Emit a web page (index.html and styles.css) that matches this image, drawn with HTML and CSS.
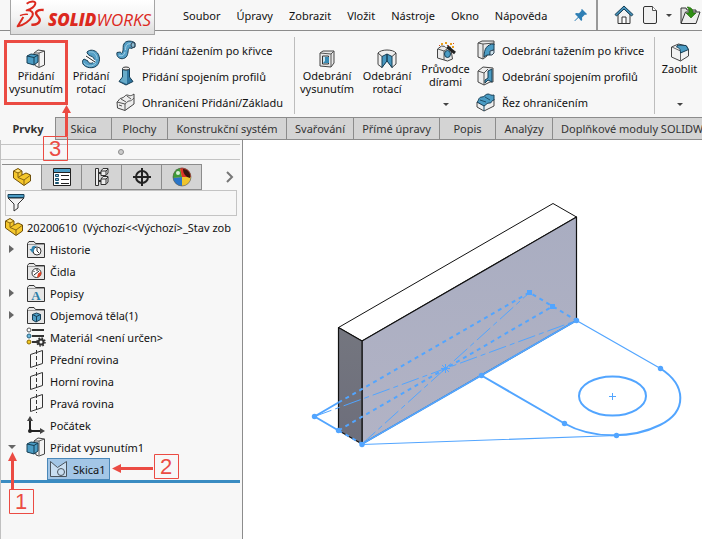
FILE: index.html
```
<!DOCTYPE html>
<html lang="cs">
<head>
  <meta charset="UTF-8" />
  <meta name="viewport" content="width=device-width, initial-scale=1.0"/>
  <title>SOLIDWORKS</title>
  <link rel="stylesheet" href="styles.css">
</head>
<body>
  <!-- Title bar -->
  <header class="topbar">
    <div class="logo">
      <svg class="logo-mark" width="28" height="28" viewBox="0 0 84 84" fill="none" stroke="#dc291e" stroke-linejoin="round">
        <path d="M32 11C42 3 60 2 58 11C56 20 44 27 32 31C46 30 54 37 49 48C42 62 24 76 5 79L22 51" stroke-width="6"/>
        <path d="M12 47C20 43 28 42 36 43" stroke-width="4"/>
        <path d="M83 30C66 28 57 35 61 43C65 51 74 55 71 63C68 71 58 75 46 74" stroke-width="7"/>
      </svg>
      <span class="logo-text"><b>SOLID</b>WORKS</span>
    </div>
    <nav class="menu">
      <a href="#">Soubor</a>
      <a href="#">Úpravy</a>
      <a href="#">Zobrazit</a>
      <a href="#">Vložit</a>
      <a href="#">Nástroje</a>
      <a href="#">Okno</a>
      <a href="#">Nápověda</a>
    </nav>
    <button class="icon-btn pin" aria-label="Připnout">
      <svg width="14" height="14" viewBox="0 0 14 14" fill="#2f7fb5">
        <path d="M8 1l5 5-1 1-1-.5-3 3 .2 2.500-1 1L4.500 9.800 1 13H.500v-.5L4 9 1 6l1-1 3 .2 2.600-2.700L7 2z"/>
      </svg>
    </button>
    <div class="quick">
      <button class="icon-btn" aria-label="Domů">
        <svg width="20" height="20" viewBox="0 0 20 20">
          <path d="M4 9.500v9h12v-9L10 4z" fill="#f2f2f2" stroke="#333"/>
          <path d="M8 18v-6h4v6" fill="#fff" stroke="#333"/>
          <path d="M10 1L1 9.500l1.500 1.500L10 4l7.500 7 1.500-1.500z" fill="#4794bd" stroke="#143d54"/>
        </svg>
      </button>
      <button class="icon-btn" aria-label="Nový">
        <svg width="16" height="20" viewBox="0 0 16 20">
          <path d="M3 1.500h7.500l4 4V17q0 1.500-1.500 1.500H3Q1.500 18.500 1.500 17V3Q1.500 1.500 3 1.500z" fill="#f1f1f1" stroke="#333"/>
          <path d="M10.500 1.500v4h4" fill="#fff" stroke="#555"/>
        </svg>
      </button>
      <span class="caret"></span>
      <button class="icon-btn" aria-label="Otevřít">
        <svg width="22" height="20" viewBox="0 0 22 20">
          <path d="M1 18V3h5l1 2h9v5" fill="#ddd" stroke="#333"/>
          <path d="M1 18.500L5.500 7H20l-4 11.500z" fill="#eee" stroke="#333"/>
          <path d="M7 2c4 0 6 2 6 6h3l-5 5-5-5h3c0-3 0-4-2-6z" fill="#2f8f14" stroke="#1c6208" stroke-width=".6"/>
        </svg>
      </button>
    </div>
  </header>

  <!-- Ribbon -->
  <section class="ribbon">
    <button class="tool tool-main">
      <svg width="20" height="20" viewBox="0 0 20 20">
        <path d="M8 4l4-3 6.500 1v14L13 18.500l-4-2z" fill="#f4f4f4" stroke="#444"/>
        <path d="M13 4l5.500-2M13 4v14M9 4l4 0" fill="none" stroke="#555"/>
        <path d="M1 7l4-2 7 1v7l-4 3-7-2z" fill="#4b9cc4" stroke="#163d52"/>
        <path d="M1 7l7 1.500 4-2.500M8 8.500V16" fill="none" stroke="#163d52"/>
      </svg>
      <span>Přidání<br>vysunutím</span>
    </button>
    <button class="tool">
      <svg width="20" height="20" viewBox="0 0 20 20">
        <path d="M6 3C9 0 14 1 16.500 4c3 4 2.500 10-1 13-4 3-11 2-13.500-2-1-2-.5-4 1-5l4 2c0 2 3 3 5 1.500 2-2 1-5-1-6-2-.8-4-1-5-4z" fill="#559fc6" stroke="#173e55"/>
        <path d="M8 3c5-1 8 3 8 7M3 14c3 4 9 4 12 0" fill="none" stroke="#9acbe0"/>
        <path d="M5 7l9 6" stroke="#fff" stroke-width="3"/><path d="M5 7l9 6" stroke="#222"/>
      </svg>
      <span>Přidání<br>rotací</span>
    </button>
    <div class="tool-list">
      <button class="row-tool">
        <svg width="20" height="20" viewBox="0 0 20 20">
          <path d="M1 12.500C0 17 4 19.500 7.500 18.500c5-1.500 4-6 5-9 .5-1.500 1.500-2 2.500-1l4-1.500V3c-2-2-8-3-10.500 0C6 6 8 9 6.500 12.500 5.500 14 4.500 13 4.500 12z" fill="#559fc6" stroke="#173e55"/>
          <path d="M9.500 10c0-5 2-7 6-6M3 15c3 2 5 0 6-3" fill="none" stroke="#a9d2e5"/>
          <ellipse cx="17" cy="5" rx="2" ry="2.500" fill="#8dbdd3" stroke="#345"/>
        </svg>
        <span>Přidání tažením po křivce</span>
      </button>
      <button class="row-tool">
        <svg width="20" height="20" viewBox="0 0 20 20">
          <path d="M6.500 3v8L3 15.500 10 19l7-3.500-3.500-4.500V3z" fill="#2f76a0" stroke="#173e55"/>
          <path d="M7 4.500h4V18l-7-3 3-4z" fill="#68abc9"/>
          <ellipse cx="10" cy="2.500" rx="3.500" ry="1.500" fill="#eee" stroke="#333"/>
        </svg>
        <span>Přidání spojením profilů</span>
      </button>
      <button class="row-tool">
        <svg width="20" height="20" viewBox="0 0 20 20">
          <path d="M1 10c2-1 2-4 5-4 3-1 3-3 5-3s3 2 7-1v10L9 18.500l-7.500-2.500z" fill="#ededed" stroke="#444"/>
          <path d="M1 10l8 2c2-1 2-3 4-3s3-1 5-3M9 12v6M5 7l5 3M11 4l4 3M3 13l3 1" fill="none" stroke="#555"/>
        </svg>
        <span>Ohraničení Přidání/Základu</span>
      </button>
    </div>
    <div class="divider"></div>
    <button class="tool wide">
      <svg width="20" height="20" viewBox="0 0 20 20">
        <path d="M3 4l3-2 11 0v12l-3 4-11-1z" fill="#e8e8e8" stroke="#444"/>
        <path d="M3 4l11 1 3-3M14 5v13" fill="none" stroke="#555"/>
        <path d="M5.500 7h6v8h-6z" fill="#c9e4f0" stroke="#333"/>
        <path d="M8 8h4v6H6l2-2z" fill="#388bb4"/>
      </svg>
      <span>Odebrání<br>vysunutím</span>
    </button>
    <button class="tool wide">
      <svg width="20" height="20" viewBox="0 0 20 20">
        <path d="M1 4c3-4 15-4 18 0v11l-4 3.500-4-6-2 0-4 6-4-3z" fill="#eee" stroke="#444"/>
        <path d="M5 7.500l5-2.500v7l-5 6.500zM15 7.500l-5-2.500v7l5 6.500z" fill="#4797c0" stroke="#173e55"/>
        <path d="M1 4l4 3.500M19 4l-4 3.500" stroke="#444"/>
      </svg>
      <span>Odebrání<br>rotací</span>
    </button>
    <button class="tool tool-drop">
      <svg width="20" height="20" viewBox="0 0 20 20">
        <path d="M1.500 7l4-3 9 1 2 12-5 2-10-3z" fill="#e9e9e9" stroke="#444"/>
        <path d="M2 7l6 2 6-4M8 9v9" fill="none" stroke="#555"/>
        <ellipse cx="11.500" cy="12" rx="3" ry="3.500" fill="#4b9cc4" stroke="#173e55"/>
        <path d="M10 4l9 7" stroke="#222" stroke-width="3"/>
        <path d="M9 3l2 2" stroke="#fff" stroke-width="2"/>
        <path d="M5 1h2v2H5zM9 0h2v2H9zM14 1h2v2h-2zM16 4h2v2h-2z" fill="#eaa01f"/>
        <path d="M3 3h1v1H3zM12 3h1v1h-1zM17 1h1v1h-1z" fill="#d04b20"/>
      </svg>
      <span>Průvodce<br>dírami</span>
      <i class="caret"></i>
    </button>
    <div class="tool-list">
      <button class="row-tool">
        <svg width="20" height="20" viewBox="0 0 20 20">
          <path d="M2 3l4-2 12 0v4c-5 0-7 5-7 11l-4 3-5-2z" fill="#e9e9e9" stroke="#444"/>
          <path d="M2 3l5 1 11-1M7 4v15" fill="none" stroke="#555"/>
          <path d="M8 17C8 9 11 4 18 4v6c-3 0-4 2-4 5l-3 0z" fill="#4b9cc4" stroke="#173e55"/>
          <path d="M14 11l4-1v3l-2 2h-2z" fill="#cfe4ee" stroke="#345"/>
        </svg>
        <span>Odebrání tažením po křivce</span>
      </button>
      <button class="row-tool">
        <svg width="20" height="20" viewBox="0 0 20 20">
          <path d="M2 5l5-4 10 1v14l-3 0-6 3-6-3z" fill="#eee" stroke="#444"/>
          <path d="M2 5l6 2 4-4M8 7v12" fill="none" stroke="#555"/>
          <path d="M12 5l4-2v13l-4-2-3 3V14l3-2z" fill="#4b9cc4" stroke="#173e55"/>
        </svg>
        <span>Odebrání spojením profilů</span>
      </button>
      <button class="row-tool">
        <svg width="20" height="20" viewBox="0 0 20 20">
          <path d="M1 10l7 3 10-6v7L8 19l-7-4z" fill="#eee" stroke="#444"/>
          <path d="M1 10C3 9 2 5 6 5c3 0 3-3 6-3 2 0 3 2 6 1v5c-3 0-2 4-5 3-2 0-3 2-5 3z" fill="#4b9cc4" stroke="#173e55"/>
          <path d="M4 8l6 2M9 5l5 3M8 13v6" fill="none" stroke="#1d516c"/>
        </svg>
        <span>Řez ohraničením</span>
      </button>
    </div>
    <div class="divider"></div>
    <button class="tool tool-drop tool-last">
      <svg width="20" height="20" viewBox="0 0 20 20">
        <path d="M1.500 5l7-3 8 2 2 4v6l-8 5-9-4z" fill="#f2f2f2" stroke="#444"/>
        <path d="M2 5l8.500 4v10" fill="none" stroke="#666"/>
        <path d="M8 3l8 .5 2.500 4-8 3.500c0-4-1-5-4-6z" fill="#4b9cc4" stroke="#173e55"/>
      </svg>
      <span>Zaoblit</span>
      <i class="caret"></i>
    </button>
  </section>

  <nav class="tabs">
    <button class="tab active">Prvky</button>
    <button class="tab">Skica</button>
    <button class="tab">Plochy</button>
    <button class="tab">Konstrukční systém</button>
    <button class="tab">Svařování</button>
    <button class="tab">Přímé úpravy</button>
    <button class="tab">Popis</button>
    <button class="tab">Analýzy</button>
    <button class="tab tab-last">Doplňkové moduly SOLIDWORKS</button>
  </nav>

  <main class="workspace">
    <!-- Feature manager -->
    <aside class="panel">
      <div class="splitter"><span class="dot"></span></div>
      <div class="panel-tabs">
        <button class="panel-tab active" aria-label="Strom">
          <svg width="20" height="20" viewBox="0 0 20 20"><use href="#part"/></svg>
        </button>
        <button class="panel-tab" aria-label="Vlastnosti">
          <svg width="20" height="20" viewBox="0 0 20 20">
            <path d="M1.500 1.500h17v17h-17z" fill="#fff" stroke="#222"/>
            <path d="M2 2h16v3H2z" fill="#4b9cc4"/>
            <path d="M1 5.500h18" stroke="#222"/>
            <path d="M3.500 7.500h3v2h-3zM3.500 11.500h3v2h-3zM3.500 15.500h3v1h-3z" fill="#8cc3dd" stroke="#17506d"/>
            <path d="M9 8.500h8M9 12.500h8M9 16.500h8" stroke="#222"/>
          </svg>
        </button>
        <button class="panel-tab" aria-label="Konfigurace">
          <svg width="20" height="20" viewBox="0 0 20 20" fill="#eee" stroke="#333">
            <path d="M3.500 1.500h3v17h-3z"/>
            <path d="M6.500 6h3M6.500 14h3" stroke-width="2"/>
            <path d="M9 4l2-2.500h5V6l-2 2.500H9zM9 12l2-2.500h5V15l-2 2.500H9z"/>
            <path d="M9 4h5v4M14 4l2-2M9 12h5v5M14 12l2-2" fill="none"/>
          </svg>
        </button>
        <button class="panel-tab" aria-label="Kóty">
          <svg width="20" height="20" viewBox="0 0 20 20" fill="none" stroke="#222" stroke-width="2">
            <circle cx="10" cy="10" r="6"/><path d="M10 1v18M1 10h18"/>
          </svg>
        </button>
        <button class="panel-tab" aria-label="Vzhled">
          <svg width="20" height="20" viewBox="0 0 20 20">
            <circle cx="10" cy="10" r="9" fill="#efc52c"/>
            <path d="M10 10L1 11A9 9 0 0 1 8 1z" fill="#3f9b38"/>
            <path d="M10 10L8 1a9 9 0 0 1 11 9z" fill="#dc3428"/>
            <path d="M10 10L1 11a9 9 0 0 0 9 8z" fill="#2a75c8"/>
            <path d="M11 2c5 0 8 4 7 9-4-1-7-4-7-9z" fill="#3a1710"/>
            <circle cx="6" cy="6" r="2" fill="#d8efd5"/>
            <circle cx="10" cy="10" r="9" fill="none" stroke="#555" stroke-width=".6"/>
          </svg>
        </button>
        <button class="more" aria-label="Další">
          <svg width="8" height="12" viewBox="0 0 8 12" fill="none" stroke="#777" stroke-width="2"><path d="M1 1l5 5-5 5"/></svg>
        </button>
      </div>
      <label class="filter">
        <svg width="20" height="20" viewBox="0 0 20 20">
          <path d="M2 5l6 6v7l4-3v-4l6-6z" fill="#f2f2f2" stroke="#333"/>
          <path d="M2 1.500h16v3H2z" fill="#4b9cc4" stroke="#173e55"/>
        </svg>
        <input type="text" aria-label="Filtr">
      </label>

      <ul class="tree">
        <li class="node root">
          <svg width="20" height="20" viewBox="0 0 20 20"><use href="#part"/></svg>
          <span>20200610&nbsp; (Výchozí&lt;&lt;Výchozí&gt;_Stav zob</span>
        </li>
        <li class="node">
          <i class="arrow"></i>
          <svg width="20" height="20" viewBox="0 0 20 20"><use href="#folder"/>
            <circle cx="11" cy="12" r="4" fill="#fff" stroke="#333"/><path d="M11 9v3l2 2" fill="none" stroke="#333"/>
            <path d="M3.500 10l3 4 2-4c0-2 1-3 3-3-4-1-6 0-6 3z" fill="#2f83af"/>
          </svg>
          <span>Historie</span>
        </li>
        <li class="node">
          <i class="arrow none"></i>
          <svg width="20" height="20" viewBox="0 0 20 20"><use href="#folder"/>
            <circle cx="10.500" cy="12" r="4.500" fill="#fff" stroke="#333"/>
            <path d="M11 16.500a4.500 4.500 0 0 0 4-6l-3 2z" fill="#e54224"/>
            <path d="M8 14l5-4M8 10v1M11 8v2" stroke="#222"/>
          </svg>
          <span>Čidla</span>
        </li>
        <li class="node">
          <i class="arrow"></i>
          <svg width="20" height="20" viewBox="0 0 20 20"><use href="#folder"/>
            <text x="10" y="17" class="folder-a">A</text>
          </svg>
          <span>Popisy</span>
        </li>
        <li class="node">
          <i class="arrow"></i>
          <svg width="20" height="20" viewBox="0 0 20 20"><use href="#folder"/>
            <path d="M6.500 9.500l4-1.500 4 1.500v5L10 17l-3.500-2z" fill="#4b9cc4" stroke="#173e55"/>
            <path d="M6.500 9.500l4 2 4-2M10.500 11v6" fill="none" stroke="#173e55"/>
          </svg>
          <span>Objemová těla(1)</span>
        </li>
        <li class="node">
          <i class="arrow none"></i>
          <svg width="20" height="20" viewBox="0 0 20 20">
            <path d="M6 3h12M6 9h12M6 15h6" stroke="#333" stroke-width="2"/>
            <circle cx="3" cy="3" r="2" fill="#fff" stroke="#555"/>
            <circle cx="3" cy="9" r="2" fill="#6dbbe0" stroke="#28627f"/>
            <circle cx="3" cy="15" r="2" fill="#f4c91e" stroke="#8b6a05"/>
            <circle cx="15" cy="15" r="2.500" fill="none" stroke="#333" stroke-width="2"/>
            <circle cx="15" cy="15" r="4" fill="none" stroke="#333" stroke-width="1.500" stroke-dasharray="1.600 1.540"/>
          </svg>
          <span>Materiál &lt;není určen&gt;</span>
        </li>
        <li class="node">
          <i class="arrow none"></i>
          <svg width="20" height="20" viewBox="0 0 20 20"><use href="#plane"/></svg>
          <span>Přední rovina</span>
        </li>
        <li class="node">
          <i class="arrow none"></i>
          <svg width="20" height="20" viewBox="0 0 20 20"><use href="#plane"/></svg>
          <span>Horní rovina</span>
        </li>
        <li class="node">
          <i class="arrow none"></i>
          <svg width="20" height="20" viewBox="0 0 20 20"><use href="#plane"/></svg>
          <span>Pravá rovina</span>
        </li>
        <li class="node">
          <i class="arrow none"></i>
          <svg width="20" height="20" viewBox="0 0 20 20">
            <path d="M4 4v12h12" fill="none" stroke="#222" stroke-width="2"/>
            <path d="M4 1l3 5H1zM19 16l-5 3v-6z" fill="#444"/>
            <circle cx="4" cy="16" r="2" fill="#222"/>
          </svg>
          <span>Počátek</span>
        </li>
        <li class="node">
          <i class="arrow open"></i>
          <svg width="20" height="20" viewBox="0 0 20 20">
            <path d="M8 4l4-3 6.500 1v15L13 19l-3-1z" fill="#f4f4f4" stroke="#444"/>
            <path d="M13 4l5.500-2M8 4l5 0v14" fill="none" stroke="#555"/>
            <path d="M1 7l4-2 7 1v8l-4 3-7-2z" fill="#4b9cc4" stroke="#163d52"/>
            <path d="M1 7l7 1.500 4-2.500M8 8.500V17" fill="none" stroke="#163d52"/>
          </svg>
          <span>Přidat vysunutím1</span>
        </li>
        <li class="node child">
          <button class="selected">
            <svg width="20" height="18" viewBox="0 0 20 18">
              <path d="M1.500 1.500l7 6 9-6v15h-16z" fill="#c9def1" stroke="#4b555e"/>
              <circle cx="12" cy="12" r="3.500" fill="#c9def1" stroke="#4b555e"/>
            </svg>
            <span>Skica1</span>
          </button>
        </li>
      </ul>
      <div class="rollback"></div>
    </aside>

    <!-- Model view -->
    <svg class="viewport" viewBox="243 140 459 399" preserveAspectRatio="xMinYMin meet">
      <defs>
        <linearGradient id="face" x1="0" y1="0" x2="0" y2="1">
          <stop offset="0" stop-color="#a9adc1"/><stop offset="1" stop-color="#b2b3c5"/>
        </linearGradient>
        <linearGradient id="side" x1="0" y1="0" x2="0" y2="1">
          <stop offset="0" stop-color="#74767f"/><stop offset="1" stop-color="#6d6e7b"/>
        </linearGradient>
      </defs>
      <g stroke="#111" stroke-linejoin="round">
        <path d="M338.500 327.500L553 203.500 576.500 217 362 341z" fill="#fff"/>
        <path d="M362 341L576.500 217V320.500L362 444z" fill="url(#face)" stroke-width="1.200"/>
        <path d="M338.500 327.500L362 341V444L338.500 430.500z" fill="url(#side)" stroke-width="1.200"/>
      </g>
      <g fill="none" stroke="#52a5ff" stroke-width="2">
        <path d="M362 444L576.500 320.500M314.500 416.500L338.500 430.500M314.500 416.500L338.500 402.500M481.500 375.500L564.500 423.500"/>
        <path d="M338.500 402.500L529.500 292.500 576.500 320.500M338.500 430.500L552.500 306.500M338.500 430.500L362 444" stroke-dasharray="4 4"/>
        <path d="M314.500 416.500L576.500 320.500M362 444L529.500 292.500" stroke-width="1" stroke-dasharray="18 4 5 4"/>
        <path d="M576.500 320.500L660.500 368.500M362 444.500L616.500 435.500" stroke-width="1.200"/>
        <path d="M660.500 368.500C686 385 688 411 660 425C632 439 592 439 564.500 423.500"/>
        <ellipse cx="612.500" cy="396" rx="33.500" ry="19.500"/>
        <path d="M609 396.500h7M612.500 393v7M441 368.500h9M445.500 364v9M442 365l7 7M449 365l-7 7" stroke-width="1"/>
      </g>
      <g fill="#52a5ff">
        <circle cx="314.500" cy="416.500" r="2.700"/><circle cx="338.500" cy="430.500" r="2.700"/>
        <circle cx="362" cy="444.500" r="2.700"/><circle cx="481.500" cy="375.500" r="2.700"/>
        <circle cx="576.500" cy="320.500" r="2.700"/><circle cx="660.500" cy="368.500" r="2.700"/>
        <circle cx="564.500" cy="423.500" r="2.700"/><circle cx="616.500" cy="435.500" r="2.700"/>
        <path d="M527 290h5v5h-5zM550 304h5v5h-5z"/>
      </g>
    </svg>
  </main>

  <!-- Step callouts laid over the window -->
  <svg class="callouts" width="200" height="539" viewBox="0 0 200 539">
    <g fill="none" stroke="#eb4b43">
      <path d="M66.500 136V112M12.500 489v-30M153 468.500h-33" stroke-width="3"/>
      <path d="M43.500 136.500h24v24h-24zM9.500 489.500h24v24h-24zM154.500 454.500h24v24h-24z"/>
    </g>
    <path d="M66.500 105l4.500 8h-9zM12.500 452l4.500 9H8zM112 468.500l9-4.500v9z" fill="#eb4b43"/>
    <g class="callout-text">
      <text x="55" y="156">3</text>
      <text x="21" y="509">1</text>
      <text x="166" y="474">2</text>
    </g>
  </svg>

  <!-- Shared icons -->
  <svg class="sprite" width="0" height="0">
    <symbol id="part" viewBox="0 0 20 20">
      <path d="M1.500 4L6 1.500 10 4v4l4-2 4.500 2v6L12 18.500 1.500 11z" fill="#f5c72c" stroke="#6f500b"/>
      <path d="M1.500 4L6 6l4-2M6 6v4.500L12 13l6-4.500M12 13v5M6 10.500L10 8" fill="none" stroke="#8a6713"/>
      <path d="M3 4l3-1.500L8.500 4 6 5z" fill="#ffe58a"/>
    </symbol>
    <symbol id="folder" viewBox="0 0 20 20">
      <path d="M1.500 18.500V4.500L3 2.500h5l1.500 2h9v14z" fill="#e6e6e6" stroke="#333"/>
      <path d="M2 5.500h16" stroke="#999"/>
    </symbol>
    <symbol id="plane" viewBox="0 0 20 20">
      <path d="M4.500 5.500l12-4v13l-12 4z" fill="none" stroke="#333"/>
      <path d="M10.500 1v19" fill="none" stroke="#333" stroke-dasharray="4 2"/>
    </symbol>
  </svg>
</body>
</html>
```

FILE: styles.css
```
* {
  margin: 0;
  padding: 0;
  box-sizing: border-box;
}

body {
  height: 100vh;
  display: flex;
  flex-direction: column;
  position: relative;
  overflow: hidden;
  background: #fff;
  color: #111;
  font-family: 'Noto Sans', 'Open Sans', sans-serif;
  font-size: 11px;
}

button {
  border: none;
  background: transparent;
  color: inherit;
  font: inherit;
  cursor: pointer;
}

svg {
  display: block;
  flex-shrink: 0;
}

.sprite {
  position: absolute;
}

.caret {
  width: 0;
  height: 0;
  border-left: 3px solid transparent;
  border-right: 3px solid transparent;
  border-top: 3px solid #444;
}

/* Title bar */
.topbar {
  display: flex;
  align-items: center;
  flex-shrink: 0;
  height: 31px;
  background: #f7f7f7;
  border-bottom: 1px solid #8c8c8c;
  white-space: nowrap;
}

.logo {
  display: flex;
  align-items: center;
  align-self: flex-start;
  flex-shrink: 0;
  width: 145px;
  height: 35px;
  margin-left: 10px;
  padding-left: 5px;
  gap: 4px;
  position: relative;
  z-index: 1;
  background: linear-gradient(#fff, #f4f4f4 50%, #dcdcdc);
  border: 1px solid #a5a5a5;
  border-top: none;
}

.logo-mark {
  margin-bottom: 6px;
}

.logo-text {
  padding-top: 4px;
  color: #dc291e;
  font-family: 'Open Sans', sans-serif;
  font-size: 17px;
  font-style: italic;
}

.logo-text b {
  font-weight: 800;
}

.menu {
  display: flex;
  gap: 16px;
  margin-left: 28px;
}

.menu a {
  color: #111;
  text-decoration: none;
}

.icon-btn {
  display: flex;
}

.pin {
  margin-left: auto;
  margin-right: 8px;
}

.quick {
  display: flex;
  align-items: center;
  gap: 8px;
  height: 30px;
  padding-left: 16px;
  border-left: 2px solid #999;
}

/* Ribbon */
.ribbon {
  display: flex;
  flex-shrink: 0;
  height: 86px;
  padding-left: 4px;
  background: #f7f7f7;
  white-space: nowrap;
}

.tool {
  display: flex;
  flex-direction: column;
  align-items: center;
  flex-shrink: 0;
  width: 46px;
  padding-top: 18px;
  line-height: 13px;
}

.tool-main {
  width: 64px;
  height: 65px;
  margin-top: 9px;
  padding-top: 6px;
  border: 3px solid #eb4b43;
}

.wide {
  width: 60px;
}

.tool-drop {
  width: 57px;
  padding-top: 11px;
}

.tool-drop .caret {
  margin-top: auto;
  margin-bottom: 11px;
}

.tool-last {
  width: 45px;
}

.tool-list {
  display: flex;
  flex-direction: column;
  flex: 1 0 176px;
  padding-top: 6px;
}

.row-tool {
  display: flex;
  align-items: center;
  gap: 6px;
  height: 26px;
  padding-left: 2px;
}

.divider {
  flex-shrink: 0;
  width: 1px;
  margin: 6px 2px 3px;
  background: #bdbdbd;
}

/* Command tabs */
.tabs {
  display: grid;
  grid-template-columns: 55px 56px 56px 119px 67px 86px 56px 57px 1fr;
  flex-shrink: 0;
  height: 23px;
  background: #d4d4d4;
}

.tab {
  overflow: hidden;
  border: solid #8c8c8c;
  border-width: 1px 0 1px 1px;
  color: #333;
  white-space: nowrap;
}

.tab.active {
  background: #f7f7f7;
  border-color: #f7f7f7;
  font-weight: bold;
}

.tab-last {
  padding-left: 8px;
  text-align: left;
}

/* Feature manager */
.workspace {
  display: flex;
  flex: 1;
  min-height: 0;
}

.panel {
  flex-shrink: 0;
  width: 243px;
  background: #f7f7f7;
  border-left: 1px solid #c0c0c0;
  border-right: 1px solid #8c8c8c;
}

.splitter {
  display: flex;
  align-items: center;
  justify-content: center;
  height: 16px;
  margin: 4px 2px 4px 0;
  border: solid #c4c4c4;
  border-width: 1px 0;
}

.dot {
  width: 6px;
  height: 6px;
  border: 1px solid #8c8c8c;
  border-radius: 50%;
  background: #ccc;
}

.panel-tabs {
  display: flex;
  height: 26px;
  margin-left: 1px;
  margin-right: 2px;
}

.panel-tab {
  display: flex;
  align-items: center;
  justify-content: center;
  width: 40px;
  background: #d4d4d4;
  border: solid #8c8c8c;
  border-width: 1px 1px 1px 0;
}

.panel-tab.active {
  background: #f7f7f7;
  border-bottom-color: #f7f7f7;
}

.more {
  display: flex;
  align-items: center;
  justify-content: center;
  flex: 1;
  padding-left: 18px;
}

.filter {
  display: flex;
  align-items: center;
  height: 26px;
  margin: 0 5px 0 4px;
  border: 1px solid #c4c4c4;
}

.filter input {
  flex: 1;
  min-width: 0;
  border: none;
  outline: none;
  background: transparent;
}

.tree {
  list-style: none;
  margin-right: 2px;
}

.node {
  display: flex;
  align-items: center;
  height: 22px;
  padding-left: 8px;
  white-space: nowrap;
}

.node svg {
  margin-right: 4px;
}

.root {
  padding-left: 3px;
}

.root svg {
  margin-right: 3px;
}

.child {
  padding-left: 46px;
}

.arrow {
  width: 5px;
  margin-right: 12px;
  border: solid transparent;
  border-width: 4px 0 4px 5px;
  border-left-color: #666;
}

.arrow.none {
  visibility: hidden;
}

.arrow.open {
  width: 8px;
  margin-left: -1px;
  margin-right: 10px;
  border-width: 4px 4px 0;
  border-color: #666 transparent transparent;
}

.folder-a {
  fill: #2d7ea8;
  font: bold 13px 'Liberation Serif', serif;
  text-anchor: middle;
}

.selected {
  display: flex;
  align-items: center;
  height: 22px;
  padding: 0 3px 0 1px;
  background: #a3c6e6;
  border: 1px solid #4a87b8;
}

.rollback {
  height: 3px;
  margin-right: 2px;
  background: #3a8cc2;
}

/* Model view */
.viewport {
  flex: 1;
  min-width: 0;
  height: 100%;
}

/* Callouts */
.callouts {
  position: absolute;
  top: 0;
  left: 0;
  z-index: 2;
  pointer-events: none;
}

.callout-text {
  fill: #eb4b43;
  font: 22px 'Liberation Sans', sans-serif;
  text-anchor: middle;
}
```
